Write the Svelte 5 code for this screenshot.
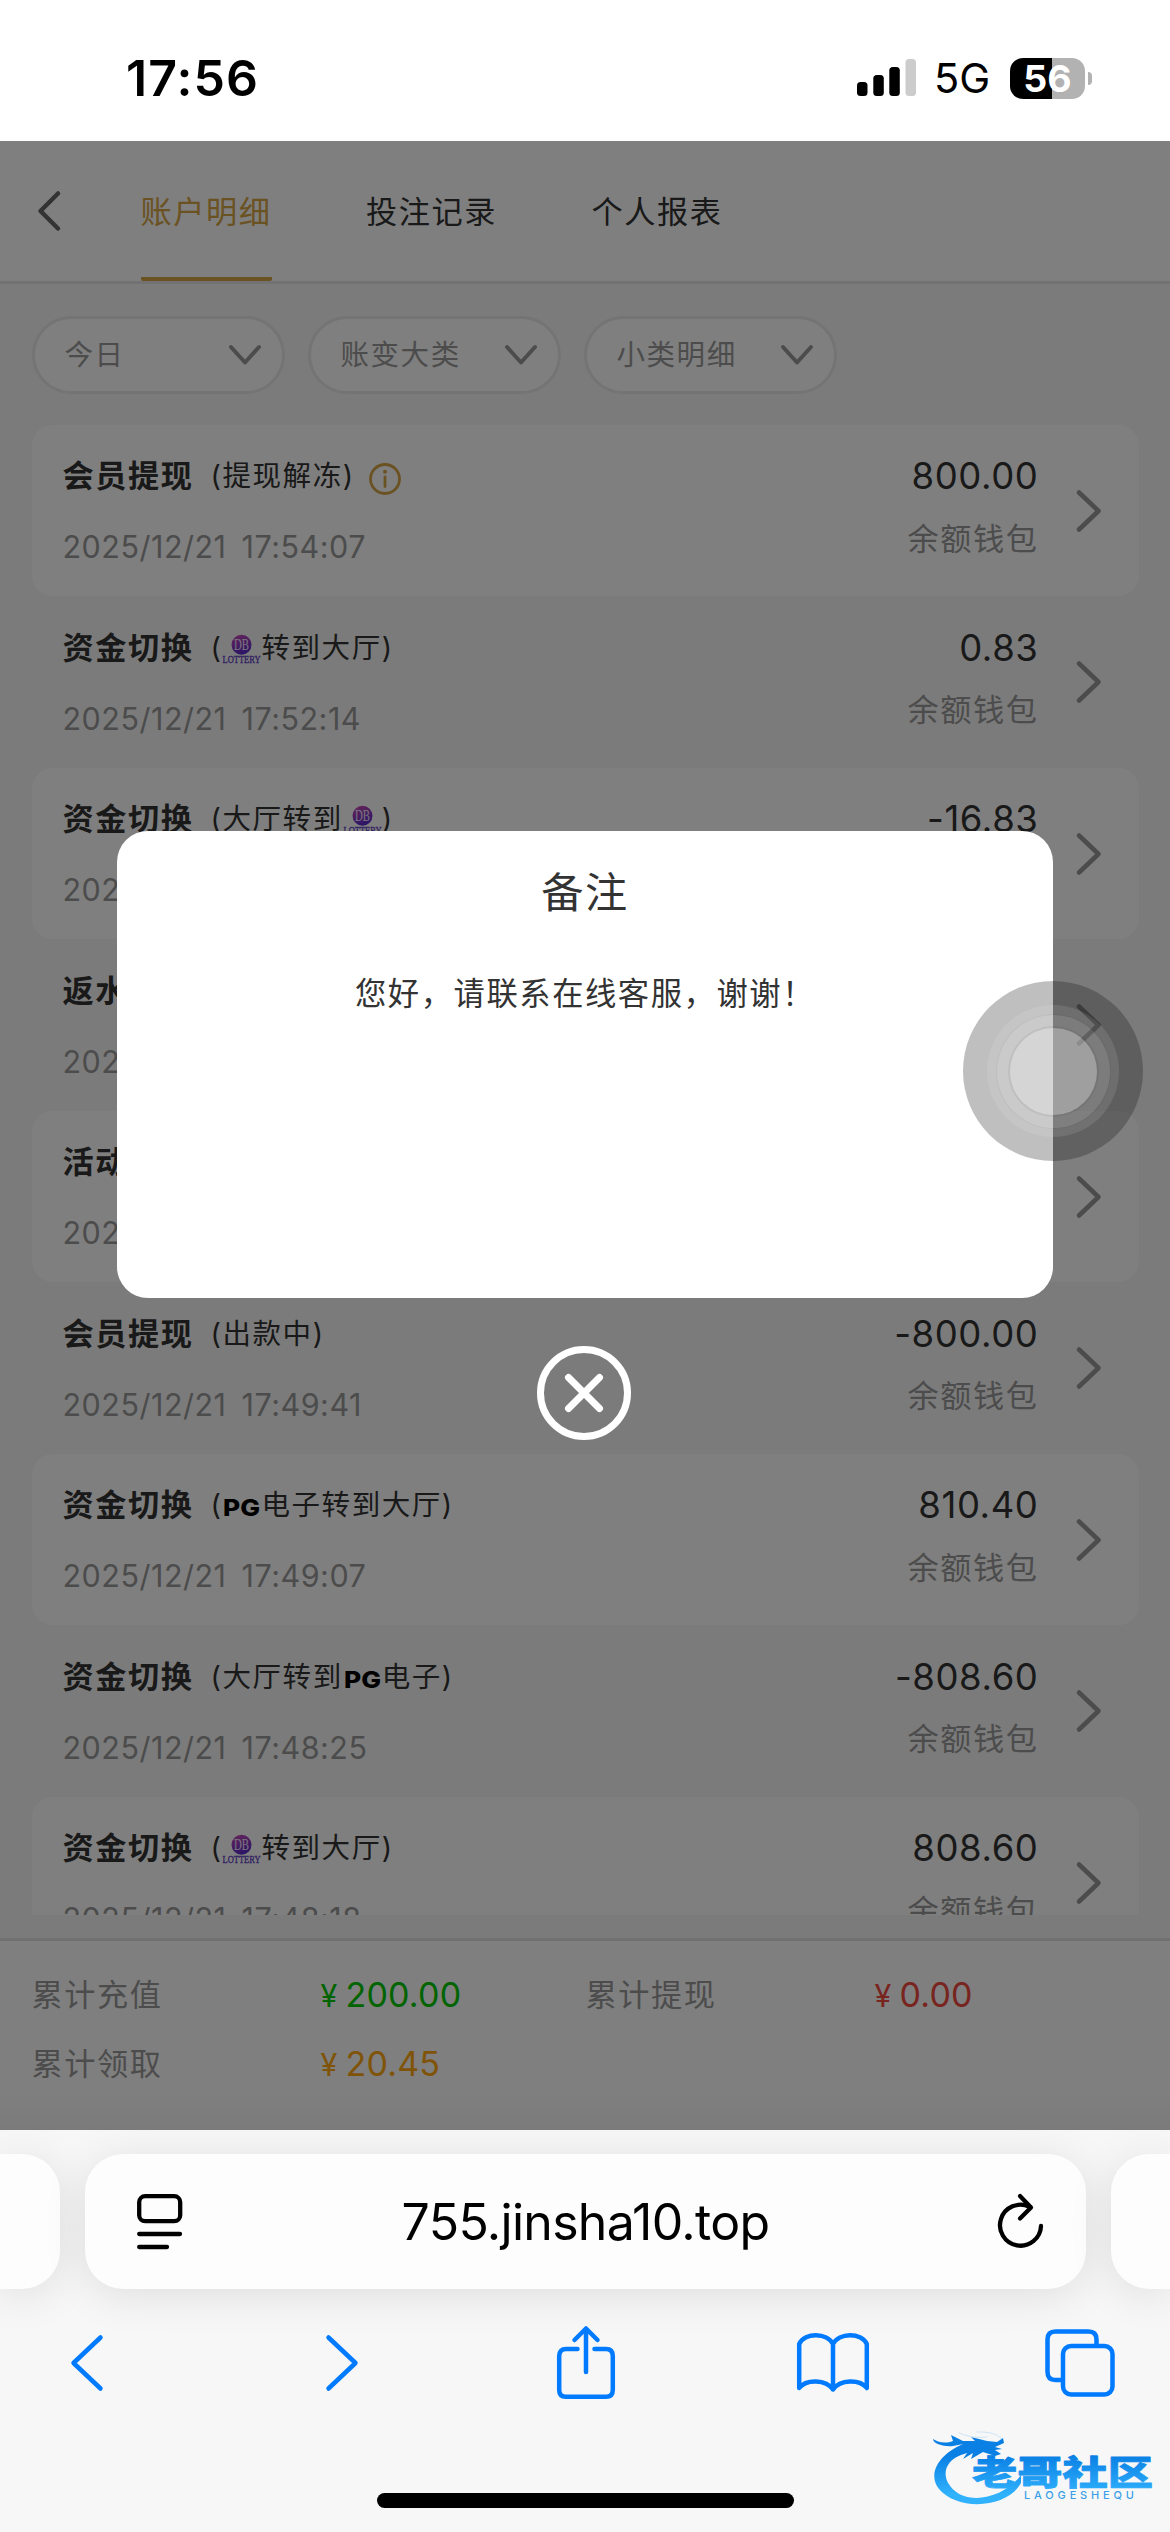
<script lang="ts">
  interface LogEntry {
    title: string;
    // 'db' and 'pg' stand for the provider logos inside the note
    note: string[];
    info?: boolean;
    time: string;
    amount: string;
  }

  const tabs = ['账户明细', '投注记录', '个人报表'];
  const filters = ['今日', '账变大类', '小类明细'];

  const entries: LogEntry[] = [
    { title: '会员提现', note: ['(提现解冻)'], info: true, time: '2025/12/21 17:54:07', amount: '800.00' },
    { title: '资金切换', note: ['(', 'db', '转到大厅)'], time: '2025/12/21 17:52:14', amount: '0.83' },
    { title: '资金切换', note: ['(大厅转到', 'db', ')'], time: '2025/12/21', amount: '-16.83' },
    { title: '返水', note: [], time: '2025/12/21', amount: '' },
    { title: '活动', note: [], time: '2025/12/21', amount: '' },
    { title: '会员提现', note: ['(出款中)'], time: '2025/12/21 17:49:41', amount: '-800.00' },
    { title: '资金切换', note: ['(', 'pg', '电子转到大厅)'], time: '2025/12/21 17:49:07', amount: '810.40' },
    { title: '资金切换', note: ['(大厅转到', 'pg', '电子)'], time: '2025/12/21 17:48:25', amount: '-808.60' },
    { title: '资金切换', note: ['(', 'db', '转到大厅)'], time: '2025/12/21 17:48:18', amount: '808.60' }
  ];

  const totals = [
    { label: '累计充值', value: '200.00', tone: 'green' },
    { label: '累计提现', value: '0.00', tone: 'red' },
    { label: '累计领取', value: '20.45', tone: 'orange' }
  ];

  let activeTab = $state(0);
  let showRemark = $state(true);
</script>

<div class="phone">
  <div class="status-bar">
    <span class="clock">17:56</span>
    <div class="status-icons">
      <svg class="signal" width="60" height="38" viewBox="0 0 60 38">
        <rect x="0" y="23" width="10.5" height="14" rx="3.5" />
        <rect x="16.3" y="16" width="10.5" height="21" rx="3.5" />
        <rect x="32.3" y="8" width="10.5" height="29" rx="3.5" />
        <rect x="48.5" y="0" width="10.5" height="37" rx="3.5" fill="#cccccc" />
      </svg>
      <span class="network">5G</span>
      <span class="battery">56</span>
      <span class="battery-tip"></span>
    </div>
  </div>

  <main class="page">
    <header class="header">
      <svg class="back" width="26" height="42" viewBox="0 0 26 42">
        <path d="M22 3.500 L4.500 21 L22 38.500" />
      </svg>
      <nav class="tabs">
        {#each tabs as tab, i}
          <button type="button" class="tab" class:active={i === activeTab} onclick={() => (activeTab = i)}>
            {tab}
          </button>
        {/each}
      </nav>
    </header>

    <div class="filters">
      {#each filters as filter}
        <div class="filter">
          <span>{filter}</span>
          <svg width="34" height="22" viewBox="0 0 34 22">
            <path d="M3 3 L17 18.500 L31 3" />
          </svg>
        </div>
      {/each}
    </div>

    <div class="list">
      {#each entries as entry}
        <div class="row">
          <div class="left">
            <div class="title-line">
              <strong>{entry.title}</strong>
              <span class="note">
                {#each entry.note as part}{#if part === 'db'}<svg class="logo" width="39" height="34" viewBox="0 0 39 34">
                      <defs>
                        <linearGradient id="db-ball" x1="0" y1="0" x2="0.4" y2="1">
                          <stop offset="0" stop-color="#d24bb4" />
                          <stop offset="1" stop-color="#5a2ccc" />
                        </linearGradient>
                      </defs>
                      <circle cx="19.500" cy="12.700" r="10" fill="url(#db-ball)" />
                      <text x="12" y="18.200" class="db-mark" textLength="15" lengthAdjust="spacingAndGlyphs">DB</text>
                      <text x="0.500" y="30.800" class="db-name" textLength="38" lengthAdjust="spacingAndGlyphs">LOTTERY</text>
                    </svg>{:else if part === 'pg'}<svg class="logo" width="39" height="34" viewBox="0 0 39 34">
                      <text x="1" y="26.500" class="pg-mark" textLength="37" lengthAdjust="spacingAndGlyphs">PG</text>
                    </svg>{:else}<span>{part}</span>{/if}{/each}
              </span>
              {#if entry.info}
                <svg class="info" width="32" height="31" viewBox="0 0 32 31">
                  <circle cx="16" cy="16" r="14.500" />
                  <path d="M16 14 V23.500" />
                  <circle class="dot" cx="16" cy="8.800" r="2" />
                </svg>
              {/if}
            </div>
            <div class="time">{entry.time}</div>
          </div>
          <div class="right">
            <div class="amount">{entry.amount}</div>
            <div class="wallet">余额钱包</div>
          </div>
          <svg class="arrow" width="28" height="44" viewBox="0 0 28 44">
            <path d="M4 3.500 L23.500 22 L4 40.500" />
          </svg>
        </div>
      {/each}
    </div>

    <footer class="totals">
      {#each totals as total}
        <div class="total">
          <span class="label">{total.label}</span>
          <span class="value {total.tone}"><small>¥</small>{total.value}</span>
        </div>
      {/each}
    </footer>

    {#if showRemark}
      <div class="mask">
        <section class="dialog">
          <h2>备注</h2>
          <p>您好，请联系在线客服，谢谢！</p>
        </section>
        <button type="button" class="close" aria-label="关闭" onclick={() => (showRemark = false)}>
          <svg width="94" height="94" viewBox="0 0 94 94">
            <circle cx="47" cy="47" r="43.500" />
            <path d="M31.500 31.500 L62.500 62.500 M62.500 31.500 L31.500 62.500" />
          </svg>
        </button>
      </div>
    {/if}

    <div class="assistive"><i><i><i></i></i></i></div>
  </main>

  <div class="browser">
    <div class="address-row">
      <div class="side-tab left-tab"></div>
      <div class="address">
        <svg width="46" height="56" viewBox="0 0 46 56">
          <rect x="2.200" y="2.200" width="41" height="25" rx="6" />
          <path d="M2.200 40 H43 M2.200 53 H30" />
        </svg>
        <span>755.jinsha10.top</span>
        <svg width="46" height="56" viewBox="0 0 46 56">
          <path d="M31.500 12.800 A20.500 20.500 0 1 0 43 32" />
          <path d="M22 2 L33 13.500 L22 24.500" />
        </svg>
      </div>
      <div class="side-tab right-tab"></div>
    </div>

    <div class="toolbar">
      <svg width="34" height="56" viewBox="0 0 34 56">
        <path d="M30.500 2.500 L3.500 28 L30.500 53.500" />
      </svg>
      <svg width="34" height="56" viewBox="0 0 34 56">
        <path d="M3.500 2.500 L30.500 28 L3.500 53.500" />
      </svg>
      <svg width="58" height="74" viewBox="0 0 58 74">
        <path d="M20.500 23 H9 Q2.200 23 2.200 30 V64 Q2.200 70.800 9 70.800 H49 Q55.800 70.800 55.800 64 V30 Q55.800 23 49 23 H37.500" />
        <path d="M29 46 V3 M17.500 14 L29 2.500 L40.500 14" />
      </svg>
      <svg width="72" height="62" viewBox="0 0 72 62">
        <path d="M36 12 C30 0.500 8 0 2.200 12 V56 C9 47 29 47 36 57.500 C43 47 63 47 69.800 56 V12 C64 0 42 0.500 36 12 V57.500" />
      </svg>
      <svg width="70" height="68" viewBox="0 0 70 68">
        <rect x="18" y="17" width="49.500" height="48.500" rx="8" />
        <path d="M51.500 15 V10.500 Q51.500 2.500 43.500 2.500 H10.500 Q2.500 2.500 2.500 10.500 V43 Q2.500 51 10.500 51 H16" />
      </svg>
    </div>

    <div class="home-bar"></div>

    <svg class="brand" width="226" height="78" viewBox="0 0 226 78">
      <defs>
        <linearGradient id="brand-fill" x1="0" y1="6" x2="0" y2="76" gradientUnits="userSpaceOnUse">
          <stop offset="0.300" stop-color="#0a80e4" />
          <stop offset="0.850" stop-color="#30b2fd" />
        </linearGradient>
      </defs>
      <path
        fill="url(#brand-fill)"
        d="M32 15 C8 25 -4 45 8 60 C26 82 76 80 90 54 L90 46 C76 66 42 77 24 62 C8 48 14 32 30 26 L36 24 L32 30 L42 24 L40 30 L52 23 L64 27 L70 25 L64 21 L71 20 L64 18 L73 14 L72 9 L66 13 L56 12 L40 8 L44 12 L32 12 L20 6 L22 12 C14 15 6 13 2 10 C2 15 14 18 22 17 Z"
      />
      <path class="whisker" d="M28 4 Q42 10 56 8 M46 3 Q62 2 70 9" />
      <text x="41" y="56" class="brand-name" textLength="181" lengthAdjust="spacingAndGlyphs">老哥社区</text>
      <text x="93" y="70" class="brand-latin" textLength="110">LAOGESHEQU</text>
    </svg>
  </div>
</div>

<style>
  :global(body) {
    margin: 0;
  }

  .phone {
    width: 1170px;
    height: 2532px;
    overflow: hidden;
    background: #fff;
    color: #333;
    font-family: Inter, 'Noto Sans CJK SC', sans-serif;
    letter-spacing: 1.56px;
  }

  svg {
    display: block;
    flex: none;
    overflow: visible;
    fill: none;
    stroke-linecap: round;
    stroke-linejoin: round;
  }

  button {
    padding: 0;
    border: 0;
    background: none;
    font: inherit;
    letter-spacing: inherit;
  }

  /* status bar */
  .status-bar {
    display: flex;
    justify-content: space-between;
    box-sizing: border-box;
    height: 141px;
    padding: 48px 78px 0 126px;
    color: #000;
    letter-spacing: 0;
  }

  .clock {
    font-size: 50px;
    font-weight: 600;
    line-height: 60px;
    letter-spacing: 1.1px;
  }

  .status-icons {
    display: flex;
    align-items: center;
    height: 60px;
  }

  .signal {
    fill: #000;
  }

  .network {
    margin-left: 17px;
    width: 76px;
    font-size: 41.500px;
    line-height: 62px;
  }

  .battery {
    width: 75px;
    height: 41px;
    border-radius: 13px;
    background: linear-gradient(90deg, #000 42px, #b2b2b2 42px);
    color: #fff;
    font-size: 37.500px;
    font-weight: 700;
    line-height: 42px;
    text-align: center;
  }

  .battery-tip {
    width: 4px;
    height: 13px;
    margin-left: 3px;
    border-radius: 0 6px 6px 0;
    background: #b2b2b2;
  }

  /* page */
  .page {
    position: relative;
    display: flex;
    flex-direction: column;
    height: 1989px;
    background: #f7f7f7;
  }

  .header {
    display: flex;
    align-items: center;
    box-sizing: border-box;
    height: 143px;
    padding-left: 36px;
    border-bottom: 3px solid #e4e4e4;
    background: #fff;
  }

  .back {
    stroke: #666;
    stroke-width: 4.5;
  }

  .tabs {
    display: flex;
    gap: 94.500px;
    height: 140px;
    margin-left: 78.500px;
  }

  .tab {
    box-sizing: border-box;
    height: 140px;
    padding-top: 6px;
    border-bottom: 4px solid transparent;
    border-radius: 2px;
    color: #333;
    font-size: 31.200px;
    line-height: 130px;
  }

  .tab.active {
    border-color: #d5a445;
    color: #d5a445;
  }

  .filters {
    display: flex;
    gap: 23px;
    padding: 32px 31.500px 30.500px;
  }

  .filter {
    display: flex;
    align-items: center;
    justify-content: space-between;
    box-sizing: border-box;
    width: 253px;
    height: 78px;
    padding: 0 20px 0 30px;
    border: 3px solid #e8e8e8;
    border-radius: 39px;
    background: #fff;
    color: #999;
    font-size: 28.500px;
    line-height: 40px;
  }

  .filter span {
    margin-bottom: 1px;
  }

  .filter svg {
    stroke: #999;
    stroke-width: 4;
  }

  .list {
    height: 1490.500px;
    margin: 0 31.500px;
    overflow: hidden;
  }

  .row {
    display: flex;
    box-sizing: border-box;
    height: 171.500px;
    padding: 31.500px 36px 0 31px;
    border-radius: 21px;
  }

  .row:nth-child(odd) {
    background: #fff;
  }

  .left {
    flex: 1;
    display: flex;
    flex-direction: column;
    gap: 31px;
    line-height: 40px;
  }

  .title-line {
    display: flex;
    height: 40px;
    white-space: nowrap;
  }

  .title-line strong {
    margin-right: 17px;
    font-size: 31.200px;
    font-weight: 700;
  }

  .note {
    display: flex;
    font-size: 28.500px;
  }

  .logo {
    margin-top: 4px;
  }

  .db-mark {
    fill: #f1e6fa;
    font: 17px 'Liberation Serif', serif;
    letter-spacing: 0;
  }

  .db-name {
    fill: #5f3fc4;
    stroke: #5f3fc4;
    stroke-width: 0.3;
    font: 9.500px 'Liberation Serif', serif;
    letter-spacing: 0;
  }

  .pg-mark {
    fill: #000;
    font: 800 23px Inter, sans-serif;
    letter-spacing: 0;
  }

  .info {
    margin: 7px 0 0 14px;
    stroke: #d5a445;
    stroke-width: 2.8;
  }

  .info .dot {
    fill: #d5a445;
    stroke: none;
  }

  .time {
    color: #999;
    font-size: 30.500px;
    letter-spacing: 0.5px;
    word-spacing: 6px;
  }

  .right {
    display: flex;
    flex-direction: column;
    gap: 22.500px;
    line-height: 40px;
    text-align: right;
  }

  .amount {
    height: 40px;
    font-size: 36.500px;
    letter-spacing: 0.6px;
  }

  .wallet {
    color: #999;
    font-size: 31.200px;
  }

  .arrow {
    margin: 32.500px 0 0 36px;
    stroke: #999;
    stroke-width: 4.6;
  }

  .totals {
    display: grid;
    grid-template-columns: 554px 1fr;
    align-content: start;
    row-gap: 28.500px;
    flex: 1;
    margin-top: 23px;
    padding: 34px 31.500px 0;
    border-top: 3px solid #e1e1e1;
    background: linear-gradient(#fff 150px, #f6f6f6 188px);
    font-size: 31.200px;
    line-height: 40px;
  }

  .total {
    display: flex;
    height: 40px;
  }

  .label {
    width: 289px;
    color: #999;
  }

  .value {
    font-size: 34px;
    letter-spacing: 0.2px;
  }

  .value small {
    margin-right: 8px;
    font-size: 30.500px;
  }

  .green {
    color: #00c800;
  }

  .red {
    color: #f0483e;
  }

  .orange {
    color: #ffa810;
  }

  /* remark dialog */
  .mask {
    position: absolute;
    inset: 0;
    display: flex;
    flex-direction: column;
    align-items: center;
    justify-content: center;
    gap: 48px;
    background: rgba(0, 0, 0, 0.5);
  }

  .dialog {
    box-sizing: border-box;
    width: 936px;
    height: 467.500px;
    padding-top: 32px;
    border-radius: 31px;
    background: #fff;
    text-align: center;
  }

  .dialog h2 {
    margin: 0;
    font-size: 42.200px;
    font-weight: 400;
    line-height: 60px;
  }

  .dialog p {
    margin: 51px 0 0;
    font-size: 31.300px;
    line-height: 40px;
  }

  .close svg {
    margin-right: 3px;
    stroke: #fff;
    stroke-width: 7;
  }

  .assistive {
    position: absolute;
    left: 963px;
    top: 840px;
    display: grid;
    place-items: center;
    width: 180px;
    height: 180px;
    border-radius: 50%;
    background: rgba(18, 18, 18, 0.27);
  }

  .assistive i {
    display: grid;
    place-items: center;
    width: 132px;
    height: 132px;
    border-radius: 50%;
    background: rgba(255, 255, 255, 0.1);
  }

  .assistive i i {
    width: 113px;
    height: 113px;
    box-shadow: 0 0 0 1px rgba(0, 0, 0, 0.04);
  }

  .assistive i i i {
    width: 87px;
    height: 87px;
    background: rgba(240, 240, 240, 0.31);
    box-shadow: 0 0 0 2px rgba(0, 0, 0, 0.05);
  }

  /* browser chrome */
  .browser {
    position: relative;
    display: flex;
    flex-direction: column;
    align-items: center;
    height: 402px;
    overflow: hidden;
    background: #f7f7f7;
    letter-spacing: 0;
  }

  .address-row {
    display: flex;
    justify-content: space-between;
    width: 1170px;
    margin-top: 24px;
  }

  .side-tab,
  .address {
    height: 135px;
    background: #fdfdfd;
    box-shadow: 0 6px 44px rgba(0, 0, 0, 0.1);
  }

  .side-tab {
    width: 59.500px;
  }

  .left-tab {
    border-radius: 0 38px 38px 0;
  }

  .right-tab {
    border-radius: 38px 0 0 38px;
  }

  .address {
    display: flex;
    align-items: center;
    justify-content: space-between;
    box-sizing: border-box;
    width: 1001px;
    padding: 0 41px 0 52px;
    border-radius: 38px;
    color: #000;
    font-size: 50px;
    letter-spacing: -0.7px;
  }

  .address span {
    margin-right: 10px;
  }

  .address svg {
    stroke: #000;
    stroke-width: 4.3;
  }

  .toolbar {
    display: grid;
    grid-template-columns: 255px 232px 240px 248.500px auto;
    align-items: center;
    box-sizing: border-box;
    width: 1170px;
    height: 76px;
    margin-top: 36px;
    padding-left: 69.500px;
  }

  .toolbar svg {
    stroke: #007aff;
    stroke-width: 4.5;
  }

  .home-bar {
    width: 417px;
    height: 15px;
    margin-top: 92px;
    border-radius: 8px;
    background: #000;
  }

  .brand {
    position: absolute;
    left: 931px;
    top: 299px;
  }

  .brand-name {
    fill: url(#brand-fill);
    stroke: url(#brand-fill);
    stroke-width: 0.8;
    font: 900 34px 'Noto Sans CJK SC', sans-serif;
  }

  .brand-latin {
    fill: #3a9fe8;
    font: 500 11px Inter, sans-serif;
  }

  .whisker {
    stroke: #cfe4f6;
    stroke-width: 1;
  }
</style>
